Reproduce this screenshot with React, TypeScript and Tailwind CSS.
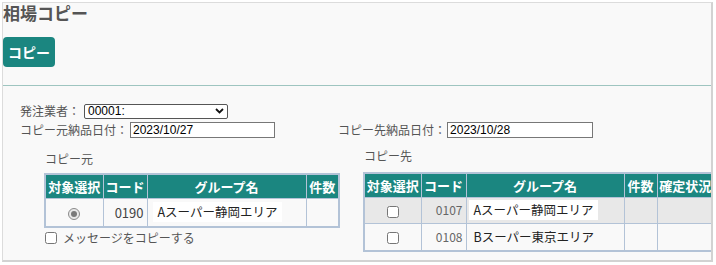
import React from 'react';

const jp = { fontFamily: '"Noto Sans CJK JP", "Noto Sans", sans-serif' };
const arial = { fontFamily: '"Liberation Sans", Arial, sans-serif' };

interface Row {
    code: string;
    name: string;
}

function HeaderCell({ children, w }: { children: React.ReactNode; w: string }) {
    return (
        <th className={`${w} border border-[#b3c3d7] bg-[#1b8680] text-white text-[13px] font-bold h-[24px] p-0 whitespace-nowrap overflow-hidden`}>
            {children}
        </th>
    );
}

function SourceTable() {
    return (
        <table className="border-collapse table-fixed w-[294px] border-2 border-[#b3c3d7]">
            <thead>
                <tr>
                    <HeaderCell w="w-[58px]">対象選択</HeaderCell>
                    <HeaderCell w="w-[44px]">コード</HeaderCell>
                    <HeaderCell w="w-[159px]">グループ名</HeaderCell>
                    <HeaderCell w="w-[33px]">件数</HeaderCell>
                </tr>
            </thead>
            <tbody>
                <tr className="h-[29px] bg-[#f9f9f9]">
                    <td className="border border-[#b3c3d7] text-center p-0">
                        {/* disabled, checked radio */}
                        <span className="inline-flex items-center justify-center w-[12px] h-[12px] rounded-full border border-[#8a8a8a] bg-[#e9e9e9] align-middle">
                            <span className="w-[6px] h-[6px] rounded-full bg-[#7a7a7a]"></span>
                        </span>
                    </td>
                    <td className="border border-[#b3c3d7] text-right pr-[3px] text-[13px] text-[#444]">0190</td>
                    <td className="border border-[#b3c3d7] pl-[5px] whitespace-nowrap overflow-hidden">
                        <span className="inline-block bg-white px-[5px] h-[20px] leading-[20px] text-[12.5px] text-[#222] whitespace-nowrap">Aスーパー静岡エリア</span>
                    </td>
                    <td className="border border-[#b3c3d7]"></td>
                </tr>
            </tbody>
        </table>
    );
}

const destRows: Row[] = [
    { code: '0107', name: 'Aスーパー静岡エリア' },
    { code: '0108', name: 'Bスーパー東京エリア' },
];

function DestTable() {
    return (
        <table className="border-collapse table-fixed w-[350px] border-2 border-[#b3c3d7]">
            <thead>
                <tr>
                    <HeaderCell w="w-[57px]">対象選択</HeaderCell>
                    <HeaderCell w="w-[45px]">コード</HeaderCell>
                    <HeaderCell w="w-[158px]">グループ名</HeaderCell>
                    <HeaderCell w="w-[33px]">件数</HeaderCell>
                    <HeaderCell w="w-[57px]">確定状況</HeaderCell>
                </tr>
            </thead>
            <tbody>
                {destRows.map((row, i) => (
                    <tr key={row.code} className={i === 0 ? 'h-[26px] bg-[#e8e8e8]' : 'h-[28px] bg-[#f9f9f9]'}>
                        <td className="border border-[#b3c3d7] text-center p-0">
                            <input type="checkbox" className="w-[12px] h-[12px] align-middle" />
                        </td>
                        <td className="border border-[#b3c3d7] text-right pr-[3px] text-[12px] text-[#666]">{row.code}</td>
                        <td className="border border-[#b3c3d7] pl-[2px] whitespace-nowrap overflow-hidden">
                            <span className={`inline-block px-[5px] h-[20px] leading-[20px] text-[12.5px] text-[#222] whitespace-nowrap ${i === 0 ? 'bg-white' : ''}`}>{row.name}</span>
                        </td>
                        <td className="border border-[#b3c3d7]"></td>
                        <td className="border border-[#b3c3d7]"></td>
                    </tr>
                ))}
            </tbody>
        </table>
    );
}

export default function App() {
    return (
        <div className="w-[716px] h-[265px] bg-white pt-[2px] pl-[2px]" style={jp}>
            <div className="w-[711px] h-[260px] bg-[#f9f9f9] border-l border-t border-[#dcdcdc] border-r-2 border-b-2 border-r-[#d2d2d2] border-b-[#d2d2d2] overflow-hidden">
                {/* Title */}
                <h1 className="text-[17px] font-bold text-[#555] leading-[20px] h-[22px]">相場コピー</h1>

                {/* Action button */}
                <button className="mt-[12px] w-[52px] h-[30px] rounded-[4px] bg-[#1b8680] text-white text-[14px] font-bold leading-none">
                    コピー
                </button>

                <div className="mt-[18px] border-t border-[#9ec5c0]"></div>

                {/* Search conditions */}
                <div className="pl-[17px] pt-[17px] text-[12px] text-[#555]">
                    <div className="flex items-center h-[16px]">
                        <span>発注業者：</span>
                        <div className="ml-[4px] w-[144px] h-[15px] border border-[#555] rounded-[2px] bg-white flex items-center justify-between px-[3px] text-black" style={arial}>
                            <span className="text-[12px] leading-none">00001:</span>
                            <svg width="9" height="6" viewBox="0 0 9 6">
                                <path d="M1 1 L4.5 4.5 L8 1" fill="none" stroke="#111" strokeWidth="1.8" />
                            </svg>
                        </div>
                    </div>
                    <div className="flex items-center h-[17px] mt-[2px]">
                        <span>コピー元納品日付：</span>
                        <div className="ml-[2px] w-[145px] h-[16px] border border-[#777] bg-white pl-[2px] text-[12px] leading-[14px] text-black" style={arial}>2023/10/27</div>
                        <span className="ml-[63px]">コピー先納品日付：</span>
                        <div className="ml-[1px] w-[146px] h-[16px] border border-[#777] bg-white pl-[2px] text-[12px] leading-[14px] text-black" style={arial}>2023/10/28</div>
                    </div>
                </div>

                {/* Copy source / destination */}
                <div className="flex pl-[41px] mt-[8px] text-[12px] text-[#555]">
                    <div className="w-[294px]">
                        <div className="pl-[1px] h-[27px] pt-[4px]">コピー元</div>
                        <SourceTable />
                        <label className="flex items-center mt-[2px] h-[15px]">
                            <input type="checkbox" className="w-[12px] h-[12px] ml-[1px] mr-[6px]" />
                            <span>メッセージをコピーする</span>
                        </label>
                    </div>
                    <div className="ml-[25px]">
                        <div className="pl-[1px] h-[26px] pt-[1px]">コピー先</div>
                        <DestTable />
                    </div>
                </div>
            </div>
        </div>
    );
}
